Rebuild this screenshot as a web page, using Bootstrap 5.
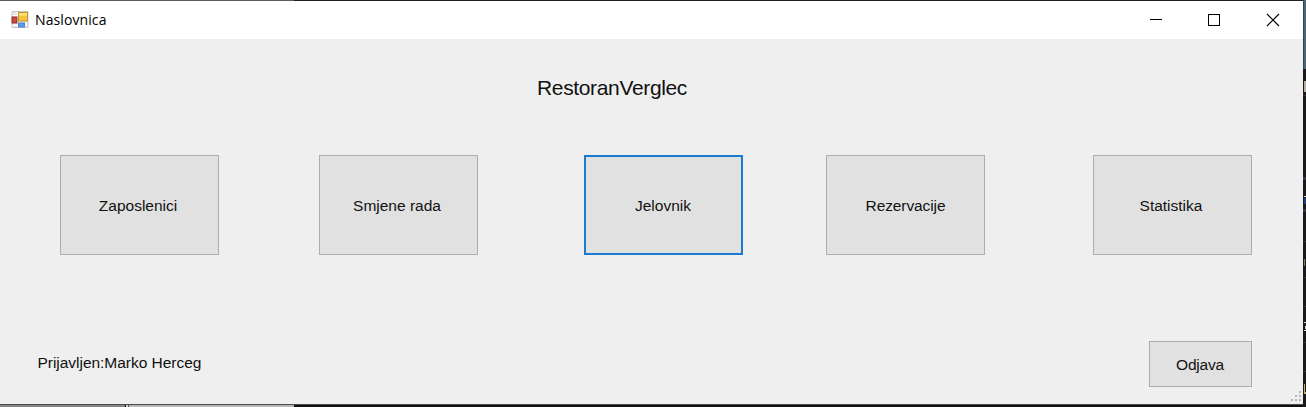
<!DOCTYPE html>
<html lang="hr">
<head>
<meta charset="utf-8">
<title>Naslovnica</title>
<link rel="stylesheet" href="https://cdn.jsdelivr.net/npm/bootstrap@5.3.0/dist/css/bootstrap.min.css">
<style>
html, body { height: 407px; }
body {
  font-family: "Liberation Sans", Arial, sans-serif;
  font-size: 15.5px; line-height: 20px; color: #111;
  background: #17171a; overflow: hidden;
}
.desk { display: grid; grid-template: 1px 403px 3px / 1303px 3px; width: 1306px; height: 407px; }
.desk-top { background: linear-gradient(90deg, #5c5c5e 294px, #222226 294px); }
.desk-bottom {
  border-top: 1px solid #4c4c4e;
  background: linear-gradient(90deg, #858585 125px, #0c0c0c 125px 126px, #ccc 126px 128px, #555 128px 129px, #b9b9b9 129px 294px, #111 294px);
}
.titlebar { height: 38px; background: #fff; color: #000; padding-left: 11px; }
.caption { font: 14px/20px "Open Sans", "Segoe UI", sans-serif; letter-spacing: .1px; margin-left: 6px; }
.ctl { width: 59px; height: 38px; padding: 0; border: 0; border-radius: 0; background: none; }
.client { height: 365px; background: #efefef; }
.heading { font-size: 21px; line-height: 24px; letter-spacing: -.35px; padding: 37px 0 0 537px; margin: 0 0 55px; font-weight: 400; color: #111; }
.menu { display: grid; grid-template-columns: 259px 265px 242px 267px 159px; margin-left: 60px; }
.tile {
  width: 159px; height: 100px; padding: 2px 3px 0 0; font-size: 15.5px; line-height: 20px; color: #111;
  background: #e1e1e1; border: 1px solid #adadad; border-radius: 0;
}
.tile:hover { background: #e1e1e1; color: #111; border-color: #adadad; }
.tile-focus, .tile-focus:hover { border: 2px solid #1a7bd0; }
.tile-focus, .tile-small { padding-right: 1px; }
.tile-condensed { padding-right: 0; letter-spacing: -.1px; }
.tile-small { width: 103px; height: 46px; letter-spacing: -.2px; }
.footer-row { margin-top: 86px; padding: 0 51px 0 37.5px; }
.label-user { margin-top: -2px; letter-spacing: -.03px; }
.t { display: inline-block; white-space: nowrap; }
.grip { position: absolute; right: 1px; bottom: 1px; }
</style>
</head>
<body>
<div class="desk">
  <div class="desk-top"></div>
  <svg style="grid-row: 1 / span 3; grid-column: 2" width="3" height="407" shape-rendering="crispEdges">
    <path fill="#19191c" d="M0 0h3v407H0z"/>
    <path fill="#4b6674" d="M0 0h3v69H0z"/>
    <path fill="#2c4654" d="M0 0h1v69H0z"/>
    <path fill="#b5afa4" d="M1 81h2v11H1z"/>
    <path fill="#34343a" d="M0 95h3v1H0zM0 177h3v3H0zM0 209h3v3H0zM0 241h3v1H0zM0 277h3v1H0zM0 306h3v1H0zM0 342h3v1H0zM0 371h3v1H0z"/>
    <path fill="#ddd" d="M1 196h2v1H1zM1 322h2v1H1zM2 326h1v3H2zM1 330h2v1H1z"/>
    <path fill="#203d78" d="M1 198h2v6H1z"/>
    <path fill="#798360" d="M1 259h1v7H1z"/>
    <path fill="#c7b071" d="M1 384h1v10H1zM2 392h1v2H2z"/>
  </svg>
  <main class="position-relative">
    <header class="titlebar d-flex align-items-center">
      <svg width="18" height="18" viewBox="0 0 18 18">
        <path fill="#e6e9ec" stroke="#c3c8cd" d="M1 .5h16v16H1z"/>
        <path stroke="#fff" d="M1.500 4.500h5M1.500 14h5M6.500 1v15M15 11v5"/>
        <rect x="7.500" y="1.500" width="9" height="8.500" fill="#f3c63a" stroke="#c09428"/>
        <path fill="#ffe47c" d="M8 2h8v2.500H8z"/>
        <rect x="1" y="6" width="5" height="6" fill="#c94a44" stroke="#9c2f2c"/>
        <rect x="7.500" y="12" width="6" height="4" fill="#5c9bea" stroke="#4a83cf"/>
      </svg>
      <span class="caption">Naslovnica</span>
      <div class="d-flex ms-auto">
        <button class="ctl" aria-label="Minimize"><svg class="d-block" width="59" height="38" shape-rendering="crispEdges"><path stroke="#000" d="M24 18.500h12"/></svg></button>
        <button class="ctl" aria-label="Maximize"><svg class="d-block" width="59" height="38" shape-rendering="crispEdges"><path fill="none" stroke="#000" d="M23.500 13.500h11v11h-11z"/></svg></button>
        <button class="ctl" aria-label="Close"><svg class="d-block" width="59" height="38"><path stroke="#000" stroke-width="1.200" d="M23 13l12 12M35 13L23 25"/></svg></button>
      </div>
    </header>
    <section class="client">
      <h1 class="heading"><span class="t">RestoranVerglec</span></h1>
      <nav class="menu">
        <button class="btn tile"><span class="t">Zaposlenici</span></button>
        <button class="btn tile"><span class="t">Smjene rada</span></button>
        <button class="btn tile tile-focus"><span class="t">Jelovnik</span></button>
        <button class="btn tile tile-condensed"><span class="t">Rezervacije</span></button>
        <button class="btn tile"><span class="t">Statistika</span></button>
      </nav>
      <div class="footer-row d-flex justify-content-between align-items-center">
        <span class="t label-user">Prijavljen:Marko Herceg</span>
        <button class="btn tile tile-small"><span class="t">Odjava</span></button>
      </div>
    </section>
    <svg class="grip" width="12" height="12" fill="#b8b8b8" shape-rendering="crispEdges"><path d="M9 0h2v2H9zM5 4h2v2H5zM9 4h2v2H9zM1 8h2v2H1zM5 8h2v2H5zM9 8h2v2H9z"/></svg>
  </main>
  <div class="desk-bottom"></div>
</div>
<script src="https://cdn.jsdelivr.net/npm/bootstrap@5.3.0/dist/js/bootstrap.bundle.min.js"></script>
</body>
</html>
